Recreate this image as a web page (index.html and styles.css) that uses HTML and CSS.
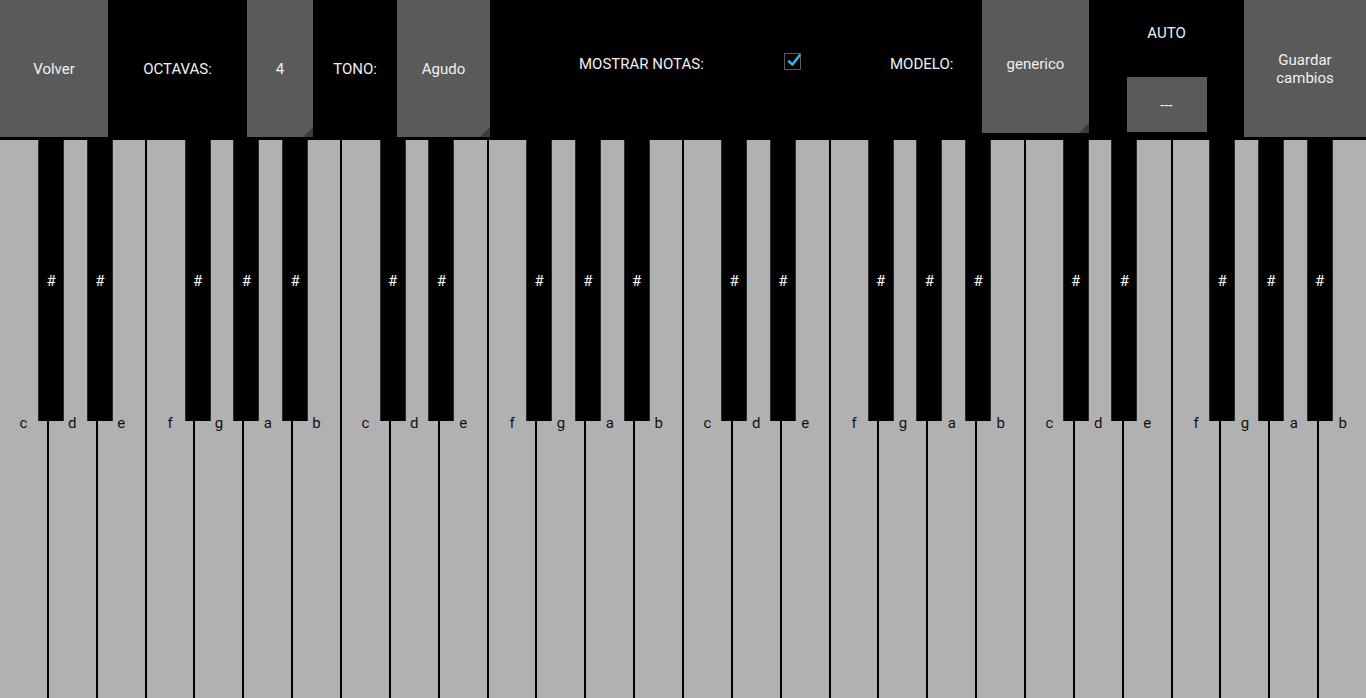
FILE: index.html
```html
<!DOCTYPE html>
<html lang="es">
<head>
<meta charset="utf-8">
<title>Piano</title>
<link rel="stylesheet" href="styles.css">
</head>
<body>
<div class="app">
  <header class="bar">
    <div class="btn volver">Volver</div>
    <div class="label octavas">OCTAVAS:</div>
    <div class="spinner sp-oct">4</div>
    <div class="label tono">TONO:</div>
    <div class="spinner sp-tono">Agudo</div>
    <div class="label mostrar">MOSTRAR NOTAS:</div>
    <div class="check-cell">
      <span class="checkbox">
        <svg viewBox="0 0 17 17" width="17" height="17"><path d="M4 9.5 L7.5 12.5 L14.5 3.5" fill="none" stroke="#33b5e5" stroke-width="2.6" stroke-linecap="round" stroke-linejoin="round"/></svg>
      </span>
    </div>
    <div class="label modelo">MODELO:</div>
    <div class="spinner sp-modelo">generico</div>
    <div class="auto-col">
      <span class="auto-label">AUTO</span>
      <div class="btn dash">---</div>
    </div>
    <div class="btn guardar">Guardar<br>cambios</div>
  </header>
  <main class="piano">
    <div class="whites">
      <div class="wk">c</div><div class="wk">d</div><div class="wk">e</div><div class="wk">f</div><div class="wk">g</div><div class="wk">a</div><div class="wk">b</div>
      <div class="wk">c</div><div class="wk">d</div><div class="wk">e</div><div class="wk">f</div><div class="wk">g</div><div class="wk">a</div><div class="wk">b</div>
      <div class="wk">c</div><div class="wk">d</div><div class="wk">e</div><div class="wk">f</div><div class="wk">g</div><div class="wk">a</div><div class="wk">b</div>
      <div class="wk">c</div><div class="wk">d</div><div class="wk">e</div><div class="wk">f</div><div class="wk">g</div><div class="wk">a</div><div class="wk">b</div>
    </div>
    <div class="bk" style="--k:1">#</div><div class="bk" style="--k:2">#</div>
    <div class="bk" style="--k:4">#</div><div class="bk" style="--k:5">#</div><div class="bk" style="--k:6">#</div>
    <div class="bk" style="--k:8">#</div><div class="bk" style="--k:9">#</div>
    <div class="bk" style="--k:11">#</div><div class="bk" style="--k:12">#</div><div class="bk" style="--k:13">#</div>
    <div class="bk" style="--k:15">#</div><div class="bk" style="--k:16">#</div>
    <div class="bk" style="--k:18">#</div><div class="bk" style="--k:19">#</div><div class="bk" style="--k:20">#</div>
    <div class="bk" style="--k:22">#</div><div class="bk" style="--k:23">#</div>
    <div class="bk" style="--k:25">#</div><div class="bk" style="--k:26">#</div><div class="bk" style="--k:27">#</div>
  </main>
</div>
</body>
</html>
```

FILE: styles.css
```css
* { box-sizing: border-box; }
html, body {
  margin: 0;
  padding: 0;
  background: #000;
  width: 1366px;
  height: 698px;
  overflow: hidden;
}
.app {
  display: flex;
  flex-direction: column;
  width: 1366px;
  height: 698px;
  font-family: Roboto, "Noto Sans", sans-serif;
  font-size: 15px;
  color: #f0f0f0;
}
.bar {
  display: flex;
  align-items: flex-start;
  height: 140px;
  flex: none;
}
.btn, .spinner, .label {
  display: flex;
  align-items: center;
  justify-content: center;
  flex: none;
}
.btn, .spinner {
  background: #5a5a5a;
}
.spinner { position: relative; }
.spinner::after {
  content: "";
  position: absolute;
  right: 0;
  bottom: 0;
  width: 0;
  height: 0;
  border-style: solid;
  border-width: 0 0 10px 10px;
  border-color: transparent transparent #3c3c3c transparent;
}
.volver { width: 108px; height: 137px; }
.octavas { width: 139px; height: 137px; }
.sp-oct { width: 66px; height: 137px; }
.tono { width: 84px; height: 137px; }
.sp-tono { width: 93px; height: 137px; }
.mostrar {
  width: 294px;
  height: 128px;
  justify-content: flex-start;
  padding-left: 89px;
}
.check-cell {
  width: 17px;
  height: 122px;
  display: flex;
  align-items: center;
  flex: none;
}
.checkbox {
  display: block;
  width: 17px;
  height: 17px;
  border: 1px solid #5c5c5c;
  position: relative;
}
.checkbox svg { position: absolute; left: 0; top: -2px; }
.modelo {
  width: 181px;
  height: 128px;
  justify-content: flex-start;
  padding-left: 89px;
}
.sp-modelo { width: 107px; height: 133px; padding-bottom: 5px; }
.auto-col {
  width: 155px;
  height: 137px;
  display: flex;
  flex-direction: column;
  align-items: center;
  flex: none;
}
.auto-label {
  margin-top: 24px;
  line-height: 18px;
}
.dash {
  margin-top: 35px;
  width: 80px;
  height: 55px;
}
.guardar {
  width: 122px;
  height: 137px;
  text-align: center;
  line-height: 18px;
}
.piano {
  position: relative;
  flex: 1;
  background: #000;
}
.whites {
  display: flex;
  gap: 2px;
  height: 100%;
}
.wk {
  flex: 1;
  background: #b1b1b1;
  color: #111;
  text-align: center;
  padding-top: 274px;
  line-height: 18px;
}
.bk {
  position: absolute;
  top: 0;
  left: calc(var(--k) * 100% / 28 - 10.6px);
  width: 26px;
  height: 281px;
  background: #000;
  border-right: 1px solid #2a2a2a;
  border-left: 1px solid #2a2a2a;
  color: #fff;
  display: flex;
  align-items: center;
  justify-content: center;
}
```
